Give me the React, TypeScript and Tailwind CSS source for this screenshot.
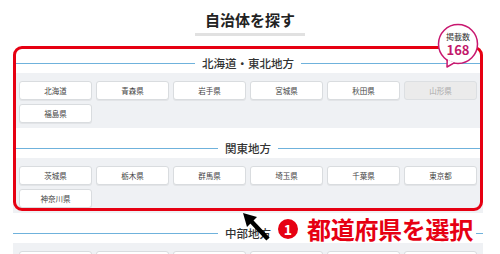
import * as React from "react";

type Pref = { name: string; off?: boolean };

const REGIONS: { title: string; prefs: Pref[] }[] = [
  {
    title: "北海道・東北地方",
    prefs: [
      { name: "北海道" }, { name: "青森県" }, { name: "岩手県" }, { name: "宮城県" },
      { name: "秋田県" }, { name: "山形県", off: true }, { name: "福島県" },
    ],
  },
  {
    title: "関東地方",
    prefs: [
      { name: "茨城県" }, { name: "栃木県" }, { name: "群馬県" }, { name: "埼玉県" },
      { name: "千葉県" }, { name: "東京都" }, { name: "神奈川県" },
    ],
  },
  {
    title: "中部地方",
    prefs: [
      { name: "新潟県" }, { name: "富山県" }, { name: "石川県" }, { name: "福井県" },
      { name: "山梨県" }, { name: "長野県" },
    ],
  },
];

function Region({ title, prefs, first }: { title: string; prefs: Pref[]; first?: boolean }) {
  return (
    <section className={first ? "" : "mt-[11px]"}>
      <div className="flex h-[19px] items-center">
        <span className="h-px flex-1 bg-[#6fb2dc]" />
        <h3 className="px-[7px] text-[11.5px] font-medium leading-none text-[#333]">{title}</h3>
        <span className="h-px flex-1 bg-[#6fb2dc]" />
      </div>
      <div className="grid grid-cols-6 gap-[4px] bg-[#eff1f4] px-[6px] pb-[5px] pt-[8px]">
        {prefs.map((p) => (
          <div
            key={p.name}
            className={
              p.off
                ? "flex h-[19px] items-center justify-center rounded-[3px] border border-[#dcdfe2] bg-[#ebebeb] text-[7.5px] text-[#aaa]"
                : "flex h-[19px] items-center justify-center rounded-[3px] border border-[#d9dcdf] bg-white text-[7.5px] text-[#444] shadow-[0_1px_0_#e2e4e7]"
            }
          >
            {p.name}
          </div>
        ))}
      </div>
    </section>
  );
}

export default function App() {
  return (
    <div className="relative h-[254px] w-[500px] overflow-hidden bg-white font-['Noto_Sans_CJK_JP',sans-serif]">
      <div className="flex flex-col items-center pt-[10px]">
        <h2 className="text-[15px] font-bold leading-[20px] text-[#222]">自治体を探す</h2>
        <span className="mt-[3px] h-[3px] w-[110px] bg-[#e1e1e1]" />
      </div>

      <div className="ml-[13px] mt-[18px] w-[470px]">
        {REGIONS.map((r, i) => (
          <Region key={r.title} title={r.title} prefs={r.prefs} first={i === 0} />
        ))}
      </div>

      {/* annotation overlay */}
      <div className="absolute left-[13px] top-[46px] h-[165px] w-[470px] rounded-[9px] border-[3px] border-[#e60012]" />

      <div className="absolute left-[436px] top-[23px] h-[46px] w-[44px]">
        <svg width="44" height="46" viewBox="0 0 44 46" className="absolute inset-0">
          <circle cx="22" cy="21" r="19.5" fill="white" stroke="#c8176f" strokeWidth="1.5" />
          <path d="M11.2 36.4 L11 44 L18.6 39.7 Z" fill="white" />
          <path d="M11.2 36.4 L11 44 L18.6 39.7" fill="none" stroke="#c8176f" strokeWidth="1.5" strokeLinejoin="round" />
        </svg>
        <div className="relative flex h-[42px] flex-col items-center justify-center gap-[2px]">
          <span className="text-[8px] leading-[8px] text-[#333]">掲載数</span>
          <span className="text-[13px] font-bold leading-[13px] text-[#c2176a]">168</span>
        </div>
      </div>

      <div className="absolute left-[272px] top-[215px] flex h-[28px] items-center gap-[9px] bg-white pl-[6px] pr-[3px]">
        <span className="flex h-[20px] w-[20px] items-center justify-center rounded-full bg-[#e60012] text-[14px] font-bold leading-none text-white">1</span>
        <span className="text-[24px] font-bold leading-none tracking-[-0.3px] text-[#e60012]">都道府県を選択</span>
      </div>

      <svg width="32" height="32" viewBox="0 0 32 32" className="absolute left-[240px] top-[210px]">
        <path d="M10 10 L28 29" stroke="black" strokeWidth="4.5" strokeLinecap="butt" />
        <path d="M3 3 L17 7 L7 17 Z" fill="black" />
      </svg>
    </div>
  );
}
